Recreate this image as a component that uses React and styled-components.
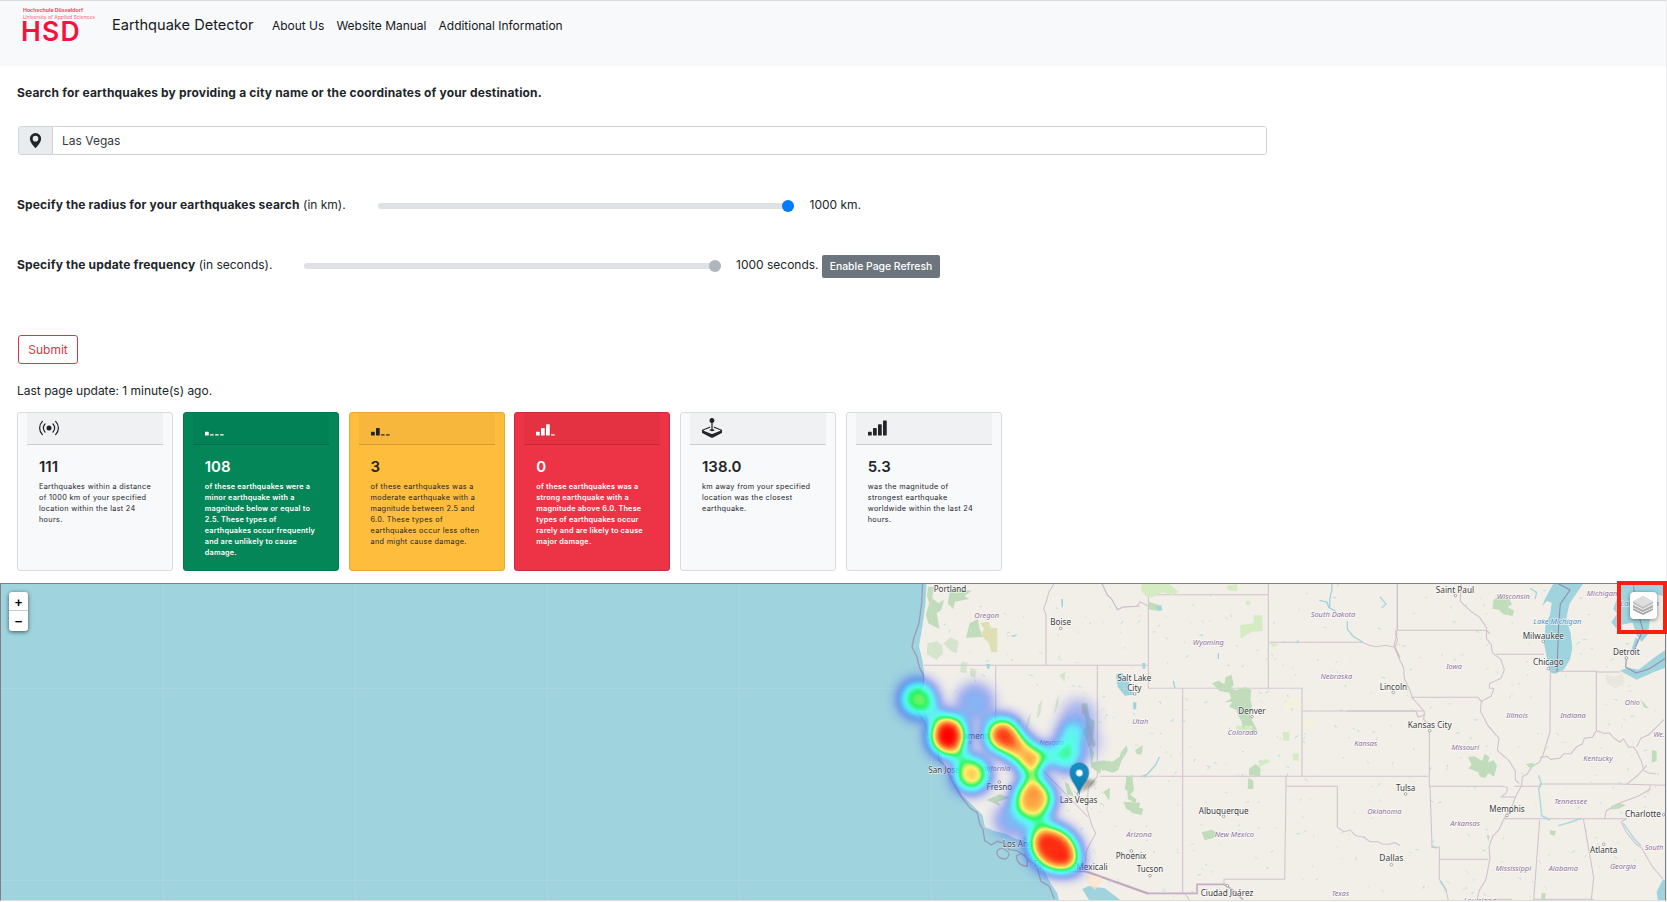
import React from "react";
import styled, { createGlobalStyle } from "styled-components";
import {
  BsBroadcast,
  BsGeoAltFill,
  BsJoystick,
  BsReception1,
  BsReception2,
  BsReception3,
  BsReception4,
} from "react-icons/bs";

const GlobalStyle = createGlobalStyle`
  *, *::before, *::after { box-sizing: border-box; }
  body {
    margin: 0;
    background: #fff;
    color: #212529;
    font-family: Inter, "Liberation Sans", sans-serif;
    font-size: 12px;
    overflow: hidden;
  }
`;

const Page = styled.div`
  width: 1667px;
  height: 902px;
  display: flex;
  flex-direction: column;
  border-right: 1px solid #ececef;
`;

const NavBar = styled.nav`
  height: 66px;
  flex: none;
  display: flex;
  align-items: flex-start;
  background: #f8f9fb;
  border-top: 1px solid #d9dbe2;
  padding: 0 22px;
`;

const Logo = styled.svg`
  width: 78px;
  height: 44px;
  margin-right: 12px;
  overflow: visible;
`;

const Brand = styled.a`
  width: 160px;
  line-height: 48px;
  font-size: 14.6px;
  color: #16181b;
  white-space: nowrap;
`;

const NavLink = styled.a`
  line-height: 49px;
  margin-right: 12.2px;
  font-size: 12px;
  letter-spacing: -0.03px;
  color: #16181b;
  white-space: nowrap;
`;

const Form = styled.form`
  display: flex;
  flex-direction: column;
  align-items: flex-start;
  padding: 0 17px;
`;

const Row = styled.div`
  display: flex;
  align-items: center;
  height: ${(p) => p.$h}px;
  margin-top: ${(p) => p.$top || 0}px;
  white-space: nowrap;
`;

const Label = styled.label`
  width: ${(p) => (p.$w ? p.$w + "px" : "auto")};
  margin-bottom: ${(p) => (p.$w ? 2 : 0)}px;
  strong { font-weight: 700; letter-spacing: 0.165px; }
`;

const InputGroup = styled.div`
  display: flex;
  width: 1249px;
  height: 29px;
  margin: 7px 0 0 1px;
  border: 1px solid #ced4da;
  border-radius: 3px;
  overflow: hidden;
`;

const Addon = styled.span`
  width: 34px;
  display: flex;
  align-items: center;
  justify-content: center;
  background: #e9ecef;
  border-right: 1px solid #ced4da;
`;

const Input = styled.input`
  flex: 1;
  border: 0;
  outline: 0;
  padding: 0 9px;
  font: inherit;
  color: #343a40;
`;

const Track = styled.div`
  width: ${(p) => p.$w}px;
  height: 6px;
  margin-top: 2px;
  border-radius: 3px;
  background: #dee2e6;
  display: flex;
  align-items: center;
  justify-content: flex-end;
`;

const Thumb = styled.span`
  width: 12px;
  height: 12px;
  border-radius: 50%;
  background: ${(p) => p.$color};
`;

const Value = styled.span`
  margin: 0 0 2px ${(p) => p.$gap}px;
  width: ${(p) => p.$w}px;
`;

const RefreshButton = styled.button`
  width: 118px;
  height: 23px;
  margin-top: 3px;
  padding: 0;
  border: 0;
  border-radius: 2px;
  background: #6c757d;
  color: #fff;
  font: 500 10.4px Inter, sans-serif;
`;

const SubmitButton = styled.button`
  width: 60px;
  height: 29px;
  margin: 55px 0 0 1px;
  padding: 0;
  border: 1px solid #dc3545;
  border-radius: 3px;
  background: #fff;
  color: #e03446;
  font: 12px Inter, sans-serif;
`;

const Cards = styled.section`
  display: grid;
  grid-template-columns: repeat(6, 156px);
  column-gap: 9.75px;
  padding: 0 17px;
  margin-top: 12px;
  height: 159px;
`;

const Card = styled.article`
  border: 1px solid ${(p) => p.$border};
  border-radius: 3px;
  background: ${(p) => p.$bg};
  color: ${(p) => p.$fg};
  padding: 0 9px;
  overflow: hidden;
`;

const CardHead = styled.header`
  height: 32px;
  padding: 5px 0 0 12px;
  background: rgba(0, 0, 0, 0.03);
  border-bottom: 1px solid rgba(0, 0, 0, 0.15);
  svg { display: block; width: 20px; height: 20px; }
`;

const Count = styled.h5`
  margin: 12px 0 0 12px;
  font-size: 15px;
  line-height: 20px;
  font-weight: 600;
`;

const CardText = styled.p`
  margin: 3.5px 0 0 12px;
  font-size: 7.3px;
  line-height: 11px;
  letter-spacing: ${(p) => (p.$weight > 500 ? 0.2 : 0.31)}px;
  white-space: pre;
  font-weight: ${(p) => p.$weight};
`;

const MapFrame = styled.section`
  position: relative;
  width: 1666px;
  height: 318px;
  margin-top: 12px;
  border: 1px solid #808080;
  border-bottom-color: #dcdcdc;
  background: #9fd3de;
`;

const MapDrawing = styled.svg`
  display: block;
  width: 1664px;
  height: 316px;
`;

const ZoomControl = styled.div`
  position: absolute;
  left: 8px;
  top: 8px;
  width: 19px;
  height: 39px;
  border-radius: 3px;
  background: #fff;
  box-shadow: 0 1px 4px rgba(0, 0, 0, 0.6);
`;

const ZoomButton = styled.div`
  height: ${(p) => (p.$last ? 20 : 19)}px;
  border-bottom: ${(p) => (p.$last ? 0 : 1)}px solid #ccc;
  padding-top: ${(p) => (p.$last ? 0 : 2)}px;
  display: flex;
  align-items: center;
  justify-content: center;
  font: bold 13px "Liberation Sans", sans-serif;
  color: #000;
`;

const Highlight = styled.div`
  position: absolute;
  right: -2px;
  top: -3px;
  width: 50px;
  height: 53px;
  border: 4px solid #ff1d0c;
  padding: 7px 0 0 9px;
`;

const LayerButton = styled.div`
  width: 27px;
  height: 27px;
  border-radius: 4px;
  background: #fff;
  box-shadow: 0 1px 4px rgba(0, 0, 0, 0.45);
  svg { display: block; width: 27px; height: 27px; }
`;

const light = { bg: "#f8f9fb", border: "#d9dbde", fg: "#212529", weight: 400 };
const cards = [
  { ...light, icon: BsBroadcast, count: "111", text: "Earthquakes within a distance\nof 1000 km of your specified\nlocation within the last 24\nhours." },
  { bg: "#048659", border: "#04784f", fg: "#fff", weight: 600, icon: BsReception1, count: "108", text: "of these earthquakes were a\nminor earthquake with a\nmagnitude below or equal to\n2.5. These types of\nearthquakes occur frequently\nand are unlikely to cause\ndamage." },
  { bg: "#ffbd3e", border: "#e5a938", fg: "#212529", weight: 400, icon: BsReception2, count: "3", text: "of these earthquakes was a\nmoderate earthquake with a\nmagnitude between 2.5 and\n6.0. These types of\nearthquakes occur less often\nand might cause damage." },
  { bg: "#ed3446", border: "#c92c3c", fg: "#fff", weight: 600, icon: BsReception3, count: "0", text: "of these earthquakes was a\nstrong earthquake with a\nmagnitude above 6.0. These\ntypes of earthquakes occur\nrarely and are likely to cause\nmajor damage." },
  { ...light, icon: BsJoystick, count: "138.0", text: "km away from your specified\nlocation was the closest\nearthquake." },
  { ...light, icon: BsReception4, count: "5.3", text: "was the magnitude of\nstrongest earthquake\nworldwide within the last 24\nhours." },
];

// Labels are [text, centre x, baseline y, width] in thirds of a pixel, per map sheet.
const cities = {
  west: [
    ["Portland", 270, 50, 98], ["Boise", 602, 149, 62], ["San Jose", 252, 593, 94], ["Fresno", 418, 646, 77],
    ["Las Vegas", 656, 685, 113], ["Los Angeles", 496, 817, 136], ["Tijuana", 560, 876, 80], ["Mexicali", 696, 885, 94],
    ["Sacramento", 330, 492, 134],
  ],
  middle: [
    ["Salt Lake", 103, 317, 102], ["City", 103, 347, 43], ["Denver", 456, 416, 82], ["Albuquerque", 371, 716, 150],
    ["Phoenix", 93, 853, 92], ["Tucson", 150, 892, 79], ["Ciudad Juárez", 381, 963, 158],
  ],
  east: [
    ["Saint Paul", 225, 55, 115], ["Milwaukee", 490, 191, 124], ["Chicago", 505, 271, 92], ["Detroit", 739, 240, 80],
    ["Lincoln", 40, 345, 82], ["Kansas City", 149, 458, 132], ["Tulsa", 77, 648, 58], ["Memphis", 381, 712, 106],
    ["Charlotte", 789, 725, 108], ["Atlanta", 671, 834, 82], ["Dallas", 34, 858, 72],
  ],
};
const states = {
  west: [["Oregon", 380, 128, 74], ["Nevada", 575, 509, 74], ["California", 402, 587, 97]],
  middle: [
    ["Wyoming", 325, 209, 93], ["South Dakota", 699, 125, 134], ["Nebraska", 709, 313, 95], ["Utah", 121, 446, 48],
    ["Colorado", 428, 481, 89], ["Kansas", 797, 513, 69], ["Arizona", 117, 787, 76], ["New Mexico", 403, 787, 118],
    ["Oklahoma", 853, 717, 102], ["Texas", 721, 964, 52],
  ],
  east: [
    ["Wisconsin", 400, 71, 99], ["Michigan", 666, 62, 91], ["Iowa", 222, 282, 47], ["Illinois", 411, 429, 65],
    ["Indiana", 579, 429, 77], ["Ohio", 757, 389, 45], ["Missouri", 256, 525, 83], ["Kentucky", 654, 559, 88],
    ["Tennessee", 572, 686, 99], ["Arkansas", 255, 753, 89], ["Mississippi", 400, 887, 107], ["Alabama", 550, 887, 88],
    ["Georgia", 729, 881, 78], ["South", 822, 824, 56], ["We.", 837, 487, 33], ["Louisiana", 300, 984, 98],
  ],
};
const towns = {
  west: [[602, 160], [330, 502], [418, 621], [655, 657], [496, 790], [642, 877], [824, 357], [814, 828]],
  middle: [[456, 425], [371, 724], [150, 902], [382, 932]],
  east: [[226, 62], [490, 199], [505, 281], [739, 249], [40, 352], [149, 467], [77, 657], [381, 721], [671, 808], [34, 869], [851, 719]],
};

const labelFill = { city: "#3b3b40", state: "#91709a", lake: "#4d8fbd" };

function Labels({ sheet }) {
  const text = ([name, x, y, w], kind) => (
    <text
      key={name}
      x={x}
      y={y}
      textAnchor="middle"
      textLength={w}
      lengthAdjust="spacingAndGlyphs"
      fontFamily="Noto Sans, sans-serif"
      fontSize={kind === "city" ? 26 : 23.5}
      fontStyle={kind === "city" ? "normal" : "italic"}
      fill={labelFill[kind]}
      stroke="#fff"
      strokeOpacity="0.7"
      strokeWidth="4"
      paintOrder="stroke"
    >
      {name}
    </text>
  );
  return (
    <>
      {towns[sheet].map(([x, y]) => (
        <circle key={x + "-" + y} cx={x} cy={y} r="4" fill="#fff" stroke="#777" strokeWidth="1.8" />
      ))}
      {states[sheet].map((l) => text(l, "state"))}
      {cities[sheet].map((l) => text(l, "city"))}
      {sheet === "east" && text(["Lake Michigan", 532, 148, 144], "lake")}
      {sheet === "east" && text(["Lake Huron", 779, 92, 116], "lake")}
    </>
  );
}

// Small ponds and woods scattered over the plains, from a fixed seed.
function scatter(count, seed) {
  let s = seed;
  const next = () => {
    s = (s * 16807) % 2147483647;
    return s / 2147483647;
  };
  return Array.from({ length: count }, () => {
    const x = 945 + next() * 715;
    const y = 585 + next() * 312;
    const dx = (next() - 0.3) * 5;
    const dy = (next() - 0.6) * 5;
    return `M${x.toFixed(1)} ${y.toFixed(1)}l${dx.toFixed(1)} ${dy.toFixed(1)}l${(dy / 3).toFixed(1)} 1.2`;
  }).filter((d) => {
    const [x, y] = d.slice(1).split("l")[0].split(" ").map(Number);
    return x > 1060 || y < 700;
  }).join("");
}
const ponds = scatter(230, 77);
const woods = scatter(230, 4021);

const sheets = {
  west: "translate(860 575) scale(.33333)",
  middle: "translate(1100 575) scale(.33333)",
  east: "translate(1380 575) scale(.33333)",
};

function EarthquakeMap() {
  return (
    <MapDrawing viewBox="1 584 1664 316">
      <defs>
        <filter id="heat" filterUnits="userSpaceOnUse" x="0" y="200" width="900" height="800" colorInterpolationFilters="sRGB">
          <feGaussianBlur stdDeviation="21" />
          <feColorMatrix values="0 0 0 1 0  0 0 0 1 0  0 0 0 1 0  0 0 0 1 0" />
          <feComponentTransfer>
            <feFuncR type="table" tableValues=".25 .25 .25 .24 .22 .25 .25 .15 1 1 1" />
            <feFuncG type="table" tableValues=".35 .35 .38 .48 .68 .9 1 .96 .95 .55 0" />
            <feFuncB type="table" tableValues=".95 .95 .96 .97 .98 1 .9 .35 .4 .22 0" />
            <feFuncA type="table" tableValues="0 .18 .38 .55 .68 .78 .88 .95 .98 1 1" />
          </feComponentTransfer>
        </filter>
        <filter id="soft" x="-50%" y="-50%" width="200%" height="200%"><feGaussianBlur stdDeviation="4" /></filter>
        <linearGradient id="pin" x1="0" y1="0" x2="0" y2="1">
          <stop offset="0" stopColor="#1a90c6" />
          <stop offset="1" stopColor="#0a7cb0" />
        </linearGradient>
      </defs>

      <g transform={sheets.west}>
        <path fill="#f2efe9" d="M200 20L196 90 188 150 177 213 187 255 193 300 184 338 178 382 202 418 207 461 221 500 240 536 251 565 280 607 306 660 343 696 367 719 375 757 403 768 437 776 469 792 500 797 517 817 523 846 550 881 571 923 592 955 598 980 690 980 667 943 685 933 735 940 787 980 2430 980 2430 20z" />
        <path fill="none" stroke="#9c8db0" strokeWidth="4" opacity=".8" d="M188 20L185 85 177 144 161 190 156 216 171 246 178 277 191 303 190 330 167 360 172 410 196 446 207 496 236 534 235 555 255 571 272 610 301 661 331 700 352 713 359 747 369 764 374 797 394 810 411 799 433 804 448 824 471 827 494 843 505 856 529 870 543 919 568 934 583 972M411 828q11-14 26-3q20 14 0 27q-28 0-26-24M469 842q25-13 33 12l0 20q-30-1-33-32" />
        <g fill="none" stroke="#cdbccb" strokeWidth="3.2" opacity=".85">
          <path d="M190 271H712V604M407 271V440L684 726M558 271V120L551 100 559 80 567 50 582 26M726 26L742 60 755 72 772 104 790 96 840 94M712 604L685 636 681 700 695 750 707 775 680 825 673 884" />
          <path stroke="#bfa2bd" strokeWidth="5" d="M580 889L673 889 865 957" />
        </g>
        <g fill="#c0dcba">
          <path d="M204 35l18 0-5 35 18 15 17-10-8 30-14 10 9 48-34-18-8-26 11-34-7-22zM270 40l65 7-22 16 15 9-43 8-5 22-17-16zM329 145l25-13 4 26 10 28-50 2zM688 505l14 29-6 28 38-6 5 10 22-8 33-25-10 22-9 30-17 8-34-10-4 14-26-20zM800 602l18 6-2 42-22-6zM790 680l51 3-8 28-34-9zM668 385l14 0 7 43 15 10-4 50 8 22-10 10-17-57zM614 620l12 7 16 39-20-9zM380 675l39-17 31 10-36 12 7 13z" />
          <path opacity=".6" d="M203 205l28-6 15 12 3 24-19 19-30-17zM250 205l22-18 24 12-6 36-16-6zM305 260l18 3-5 32-18-4zM330 279l20 5-5 25-15-7zM598 300l19-10-4 31zM470 439l12-11-6 39-10 8zM502 431l12-21-7 38-12 24zM535 390l13-17-7 45-11 14zM588 380l10-23-4 34-12 29z" />
        </g>
        <path fill="#dfdfb5" d="M360 143l26-3 7 18 19 1v73h-18l-8-28-24-25 10-18z" />
        <path fill="#d6caa5" opacity=".8" d="M683 449l11 4 4 58-12 4-17-49zM664 385l14 8 4 34-16-12z" />
        <path fill="#ffe4c7" opacity=".7" d="M680 900l42 5 5 14-22 26-27-26z" />
        <path fill="#9fd3de" d="M603 73h6v24h-4zM379 267h12l-3 14h-6zM450 182l25-4-13 8z" />
      </g>

      <g transform={sheets.middle}>
        <g fill="none" stroke="#cdbccb" strokeWidth="3.2" opacity=".85">
          <path d="M6 26L22 60 35 72 52 104 70 96 110 94 121 80 145 94M505 26V340M145 59H505M145 59V340H606V604M-8 271H145M505 202H786l22 9 22 4 27-4 26 6 17 32M606 408H970M0 604H985M248 340V954M558 604V634H712V757l20 13 19-5 16 17 25 5 18 13 24 0 12 7 22 1 15-5 17 8M558 634L554 913H372V928M892 26V165l-6 13 7 15-8 23 15 31M255 957l13 18" />
          <path stroke="#bfa2bd" strokeWidth="5" d="M-40 889L145 955H291V928H372l25 16 32 30" />
        </g>
        <g fill="#c0dcba">
          <path d="M336 325l20-8 17 11 4-22 18-7 6 30-9 12 18 4 26-8 18 7-3 28 5 20-6 31 21 42-14 11-27-10-6-29-8-12-7-20-22-10 10-14-24 1 20-11-4-18-30-5zM78 605l18-4 6 45-11 13 19 14-5 11-21-11zM87 700l18-7 25 9-6 18-29-7zM305 772l31-8 20 14-14 10-28 8zM445 608l15 9 0 25-17 0zM447 601v-20l20-14 14 12 0 25zM71 521l10-10 2 17-20 32-8 24-22 6-10-10-14 8-9-10 0-17 25-4 15 5 18-11 5-20zM105 525l24-14-4 27-14 0zM145 80l40 12-5 17-35-6zM10 650l20-12-2 40z" />
          <path fill="#d5ecc3" d="M125 27h84l28 25-20 8-30-8-30 16-20-4-14-18zM379 32l33-5v22l-28-4zM420 151l40-6 2-24 25 0 1 47-32 2-34 21zM438 77l13 0 0 12-13 0zM407 452l51 0-2 18-45-2zM548 472l20-2v27l-19 0zM577 536h19v21l-18-1zM478 559l22-7 12 8-35 17zM505 202l33 5-17 10z" />
        </g>
        <path fill="#f5f2d6" opacity=".7" d="M553 372l47 0 5 19-28 9-24 17zM609 439l31-7 0 27-31 3z" />
        <path fill="#9fd3de" d="M48 299l18-6 12 17 13 18-7 12 15 4 1 15-26 3-21-26zM99 382h10v19l-9 3zM127 264h9v17h-8zM165 95l19-3 3 15-12-3z" />
        <path fill="none" stroke="#9fd3de" strokeWidth="4" d="M696 26l-1 21-6 26 0 23M658 76l23 5 5 16 22 13M742 138v24l17 22 29 17M178 546l-11 24-26 28-19 8M220 318l5 22M355 235v17" />
      </g>

      <g transform={sheets.east}>
        <g fill="#9fd3de">
          <path d="M520 26L498 66 486 93 501 78 515 83 510 121 497 148 492 205 503 261 510 293 526 296 551 284 570 254 577 220 572 175 559 130 568 88 582 66 609 27z" />
          <path d="M727 26H861V65L820 57 804 82 809 131 805 177 785 200 770 181 758 143 725 149 708 159 694 142 711 116 700 101zM767 187l10 8-14 31-9-2zM720 287l23-9 33 6 49-38 30-20v52l-35 14-50 22zM848 914l7 0V980H834l-4-30z" />
        </g>
        <g fill="none" stroke="#cdbccb" strokeWidth="3.2" opacity=".9">
          <path d="M52 26V166H318M46 166l5 11-9 33 14 38 15 30 2 32 17 37 9 24 17 19 17 20-2 23 19 20M92 367H294l13 16M243 26l-2 53 32 30 26 18 21 32-1 31 15 20 3 23 26 21 10 30-10 26-34 15-1 14 14 2-9 23-29 15-3 29 23 44 33 38-5 36 36 32 18 30 0 27 12 10M319 166l10 10M350 238H492M511 295L510 470l-21 70-12 23-19 9-17 26-15 8M511 289H649V467M649 291H720M480 548l20-4 12 9 27-3 12-14 22 0 17-21 17-8 6-17 24-3 12-20 23 8 17-1 11 14 19 13 12-9 14 24 15 0 11 14 13 29 8 28 14 7 23 3M800 571l-26 29-35 29M770 516l12-26 23-10 31-30 15-16M148 467V634H365l17 3-1 15-17 14H405M150 634L156 817H178V853H325M427 602l-2 31-8 12-12 25-8 21-17 29-9 13-14 31-19 20-11 32 3 35-7 36-6 28-18 29-8 28M178 853V914l20 30 7 31M402 634H480V627H710L855 631M374 731H739L724 741l13 28 28 35 20 15 31 54 33 39M479 736L461 975M610 731L641 907 634 975M463 973H640M342 973h55M810 631v12l-36 21-50 18-45 25-5 24M-100 408H108l6 18 23-7" />
          <path stroke="#9284aa" d="M535 26L570 45 541 87 536 147 531 290M739 250l-2 26 31 18 39-12 48-31M760 26l6 62 23 77-29 66" />
        </g>
        <g fill="#c0dcba">
          <path d="M340 75l22-14 26 12 8 15-12 8 18 11-4 16-28-5-13-14-20-3zM264 546l20-2 22 14 8-21 15 9-6 16 18-6 10 16-9 33-17-10-10 14-16-4-4-13-30-12 10-10zM693 694l23-11 22 7-22 11-23 2zM816 524l14 5 0 29-15 5zM510 766l18 2-4 14-14-4zM780 373l15 14 12 14-15-4zM485 954l12 1-2 20-12 0zM697 861l17 11 6 8-18 1zM438 567l21-3 7 9-18 5zM320 780l9 2-4 20z" />
        </g>
        <path fill="#e6e3d9" opacity=".8" d="M677 299l31 7 20-14 5 31-25 19-29-18z" />
        <path fill="none" stroke="#9fd3de" strokeWidth="4.5" opacity=".8" d="M476 601l8 26-8 15 5 37 4 43 25 13M730 745l33 47 20 20M182 918l18 31M155 813l15 7M535 752l38-11 31-11M0 65l18 22-13 12M450 40l20 12-5 20" />
      </g>

      <path d={ponds} fill="none" stroke="#9fd3de" strokeWidth="0.8" opacity=".75" />
      <path d={woods} fill="none" stroke="#c9e0be" strokeWidth="0.9" opacity=".7" />
      <path fill="none" stroke="#fff" opacity=".1" d="M163.500 584V901M355.500 584V901M547.500 584V901M739.500 584V901M931.500 584V901M1123.500 584V901M1315.500 584V901M1507.500 584V901M0 688.500H1665M0 880.500H1665" />

      {Object.keys(sheets).map((sheet) => (
        <g key={sheet} transform={sheets[sheet]}>
          <Labels sheet={sheet} />
        </g>
      ))}

      <g transform={sheets.west}>
        <g filter="url(#heat)">
          <ellipse cx="264" cy="482" rx="62" ry="67" />
          <circle cx="174" cy="372" r="58" opacity=".73" />
          <circle cx="226" cy="412" r="36" opacity=".25" />
          <circle cx="345" cy="382" r="56" opacity=".34" />
          <circle cx="335" cy="598" r="57" opacity=".84" />
          <circle cx="295" cy="545" r="28" opacity=".3" />
          <circle cx="427" cy="480" r="60" opacity=".78" />
          <path d="M428 480L512 552" stroke="#000" strokeWidth="94" strokeLinecap="round" opacity=".83" />
          <circle cx="512" cy="550" r="36" opacity=".25" />
          <circle cx="521" cy="672" r="66" opacity=".87" />
          <path d="M515 560V655" stroke="#000" strokeWidth="64" opacity=".42" />
          <circle cx="628" cy="480" r="40" opacity=".48" />
          <circle cx="620" cy="548" r="44" opacity=".62" />
          <circle cx="570" cy="535" r="34" opacity=".45" />
          <circle cx="655" cy="425" r="52" opacity=".24" />
          <circle cx="665" cy="500" r="54" opacity=".22" />
          <circle cx="455" cy="735" r="52" opacity=".34" />
          <circle cx="530" cy="752" r="42" opacity=".25" />
          <ellipse cx="582" cy="822" rx="87" ry="70" transform="rotate(36 582 822)" opacity=".97" />
          <circle cx="634" cy="866" r="38" opacity=".4" />
        </g>
        <path d="M660 652l18-42 30 6-8 15z" fill="#000" opacity=".3" filter="url(#soft)" />
        <path d="M657 655C651 632 630 616 630 592a28 28 0 0 1 56 0C686 616 663 632 657 655z" fill="url(#pin)" stroke="#106d9b" strokeWidth="2" />
        <circle cx="658" cy="594" r="10" fill="#fff" />
      </g>
    </MapDrawing>
  );
}

function LayersIcon() {
  return (
    <svg viewBox="0 0 27 27">
      <path d="M3 16.200L13 21 23 16.200V18L13 23 3 18z" fill="#a2a2a2" />
      <path d="M3 12.800L13 17.700 23 12.800V15.400L13 20.300 3 15.400z" fill="#b0b0b0" />
      <path d="M3 9.500L13 4 23 9.500V11.800L13 17 3 11.800z" fill="#c0c0c0" />
      <path d="M13 4L23 9.500 13 14.700 3 9.500z" fill="#dedede" />
    </svg>
  );
}

export default function App() {
  return (
    <Page>
      <GlobalStyle />
      <NavBar>
        <Logo viewBox="0 0 78 44" fill="#f9103c" fontFamily="Inter, sans-serif">
          <text x="1" y="11" fontSize="4.600" fontWeight="700" opacity=".8" textLength="60" lengthAdjust="spacingAndGlyphs">Hochschule Düsseldorf</text>
          <text x="1" y="17.600" fontSize="4.600" opacity=".7" textLength="72" lengthAdjust="spacingAndGlyphs">University of Applied Sciences</text>
          <text x="-1 20 38.500" y="40" fontSize="26.500" fontWeight="600">HSD</text>
        </Logo>
        <Brand>Earthquake Detector</Brand>
        <NavLink>About Us</NavLink>
        <NavLink>Website Manual</NavLink>
        <NavLink>Additional Information</NavLink>
      </NavBar>
      <Form>
        <Row $h={53}>
          <Label><strong>Search for earthquakes by providing a city name or the coordinates of your destination.</strong></Label>
        </Row>
        <InputGroup>
          <Addon><BsGeoAltFill size={15} /></Addon>
          <Input defaultValue="Las Vegas" />
        </InputGroup>
        <Row $h={30} $top={35}>
          <Label $w={361}><strong>Specify the radius for your earthquakes search</strong> (in km).</Label>
          <Track $w={416}><Thumb $color="#007bff" /></Track>
          <Value $gap={15.5} $w={60}>1000 km.</Value>
        </Row>
        <Row $h={30} $top={30}>
          <Label $w={287}><strong>Specify the update frequency</strong> (in seconds).</Label>
          <Track $w={417}><Thumb $color="#adb5bd" /></Track>
          <Value $gap={15} $w={86}>1000 seconds.</Value>
          <RefreshButton type="button">Enable Page Refresh</RefreshButton>
        </Row>
        <SubmitButton type="button">Submit</SubmitButton>
        <Row $h={20} $top={16}>Last page update: 1 minute(s) ago.</Row>
      </Form>
      <Cards>
        {cards.map(({ icon: Icon, ...c }) => (
          <Card key={c.count} $bg={c.bg} $border={c.border} $fg={c.fg}>
            <CardHead><Icon /></CardHead>
            <Count>{c.count}</Count>
            <CardText $weight={c.weight}>{c.text}</CardText>
          </Card>
        ))}
      </Cards>
      <MapFrame>
        <EarthquakeMap />
        <ZoomControl>
          <ZoomButton>+</ZoomButton>
          <ZoomButton $last>−</ZoomButton>
        </ZoomControl>
        <Highlight>
          <LayerButton><LayersIcon /></LayerButton>
        </Highlight>
      </MapFrame>
    </Page>
  );
}
